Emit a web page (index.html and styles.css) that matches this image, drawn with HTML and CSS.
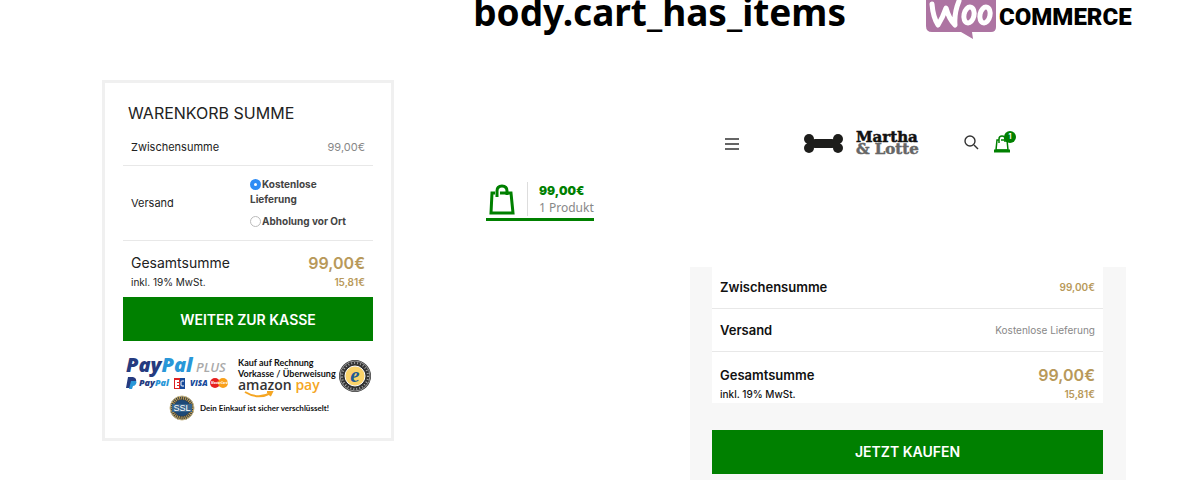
FILE: index.html
```html
<!DOCTYPE html>
<html lang="de">
<head>
  <meta charset="UTF-8">
  <meta name="viewport" content="width=device-width, initial-scale=1">
  <title>body.cart_has_items</title>
  <link rel="stylesheet" href="styles.css">
</head>
<body>

<header class="page-header">
  <h1>body.cart_has_items</h1>
  <!-- WooCommerce logo -->
  <svg class="woo-logo" width="206" height="40" viewBox="0 0 206 40" role="img" aria-label="WooCommerce">
    <path fill="#ad74a2" d="M0-4h70v31q0 5-5 5H50l-4 0 1 7-12-7H6q-6 0-6-6z"/>
    <g fill="none" stroke="#fff" stroke-width="5" stroke-linecap="round" stroke-linejoin="round">
      <path d="M6 4q1 13 6 21q5-8 8-17q3 11 9 17q-1-12 4-24"/>
      <ellipse cx="43" cy="15" rx="5" ry="8" transform="rotate(12 43 15)"/>
      <ellipse cx="59" cy="15" rx="5" ry="8" transform="rotate(12 59 15)"/>
    </g>
    <text class="woo-text" x="73" y="25">COMMERCE</text>
  </svg>
</header>

<main class="board">

  <!-- Warenkorb -->
  <section class="cart-totals">
    <h2>Warenkorb Summe</h2>
    <table class="totals">
      <tr>
        <th>Zwischensumme</th>
        <td class="amount">99,00€</td>
      </tr>
      <tr class="shipping">
        <th>Versand</th>
        <td>
          <div class="method"><input type="radio" name="shipping" id="ship-free" checked><label for="ship-free">Kostenlose Lieferung</label></div>
          <div class="method"><input type="radio" name="shipping" id="ship-local"><label for="ship-local">Abholung vor Ort</label></div>
        </td>
      </tr>
      <tr class="total">
        <th>Gesamtsumme <small>inkl. 19% MwSt.</small></th>
        <td class="amount">99,00€ <small>15,81€</small></td>
      </tr>
    </table>
    <button type="button" class="btn">Weiter zur Kasse</button>

    <!-- Zahlungsarten -->
    <svg class="payments" viewBox="0 0 250 72" role="img" aria-label="Zahlungsarten">
      <text class="paypal big" x="3" y="20" fill="#253b80">Pay<tspan fill="#2997d8">Pal</tspan></text>
      <text class="plus" x="73" y="20">PLUS</text>

      <path fill="#253b80" d="M5 25h5q4 1 3 5q-1 3-5 3l-1 3H3z"/>
      <path fill="#2997d8" d="M8 29h5q1 1 0 3q-1 2-3 2l-1 3H6z"/>
      <text class="paypal small" x="16" y="34" fill="#253b80">Pay<tspan fill="#2997d8">Pal</tspan></text>
      <rect x="51" y="26" width="11" height="11" fill="#d22"/>
      <path fill="#fff" d="M52 28h4v2h-2v1h2v2h-2v1h2v2h-4z"/>
      <path fill="#16499a" d="M57 26h5v11h-5z"/>
      <path fill="none" stroke="#fff" d="M61 29h-2q-1 0-1 1v3q0 1 1 1h2"/>
      <text class="visa" x="67" y="34">VISA</text>
      <circle cx="92" cy="31" r="5" fill="#e62020"/>
      <circle cx="100" cy="31" r="5" fill="#f9a01b"/>
      <text class="mastercard" x="88" y="32">MasterCard</text>

      <text class="label" x="115" y="14">Kauf auf Rechnung</text>
      <text class="label" x="115" y="25">Vorkasse / Überweisung</text>
      <text class="amazon" x="115" y="38">amazon <tspan fill="#f5a623">pay</tspan></text>
      <path fill="none" stroke="#f5a623" stroke-width="2" d="M122 40q13 8 26 1m-4-1l5 0-2 4"/>

      <circle cx="232" cy="24" r="16" fill="#333"/>
      <circle cx="232" cy="24" r="15" fill="none" stroke="#999"/>
      <circle cx="232" cy="24" r="13" fill="none" stroke="#aaa" stroke-width="2" stroke-dasharray="1 2"/>
      <circle cx="232" cy="24" r="10" fill="#fbd36a" stroke="#fff"/>
      <text class="trusted" x="232" y="30">e</text>

      <circle cx="59" cy="56" r="12" fill="#333c45"/>
      <circle cx="59" cy="56" r="10" fill="none" stroke="#c9a655" stroke-width="3" stroke-dasharray="1 1"/>
      <circle cx="59" cy="56" r="12" fill="none" stroke="#c9b98a"/>
      <circle cx="59" cy="56" r="8" fill="#1e4a78"/>
      <path fill="#38658d" d="M49 52h20v8H49z"/>
      <text class="ssl" x="59" y="59">SSL</text>
      <text class="label secure" x="77" y="59">Dein Einkauf ist sicher verschlüsselt!</text>
    </svg>
  </section>

  <!-- Mini cart -->
  <div class="mini-cart-wrap">
    <a href="#" class="mini-cart">
      <svg width="28" height="32" viewBox="0 0 28 32" fill="none" stroke="#008000" stroke-width="3" aria-hidden="true">
        <path d="M7 10H4L3 30h22L23 10H12"/>
        <path d="M9 14V8q0-5 5-5q5 0 5 5v4"/>
      </svg>
      <span class="mini-cart-info">
        <strong>99,00€</strong>
        <span>1 Produkt</span>
      </span>
    </a>
  </div>

  <!-- Mobile -->
  <div class="mobile">
    <nav class="mobile-nav">
      <button type="button" class="icon-btn" aria-label="Menü">
        <svg width="14" height="12" viewBox="0 0 14 12" stroke="#333" stroke-width="1.5"><path d="M0 1h14M0 6h14M0 11h14"/></svg>
      </button>
      <a href="#" class="brand" aria-label="Martha &amp; Lotte">
        <svg width="134" height="24" viewBox="0 0 134 24">
          <g fill="#1d1d1b">
            <circle cx="7" cy="7" r="5"/><circle cx="7" cy="16" r="5"/>
            <circle cx="36" cy="7" r="5"/><circle cx="36" cy="16" r="5"/>
            <path d="M5 6q5 2 8 1h17q4 1 8-1v11q-4-2-8-1H13q-3-1-8 1z"/>
          </g>
          <text class="brand-text" x="54" y="10">Martha</text>
          <text class="brand-text grey" x="54" y="22">&amp; Lotte</text>
        </svg>
      </a>
      <div class="nav-icons">
        <button type="button" class="icon-btn" aria-label="Suche">
          <svg width="15" height="15" viewBox="0 0 15 15" fill="none" stroke="#333" stroke-width="1.4"><circle cx="6" cy="6" r="5"/><path d="M10 10l4 4"/></svg>
        </button>
        <a href="#" class="cart-icon" aria-label="Warenkorb">
          <svg width="16" height="18" viewBox="0 0 16 18" fill="none" stroke="#008000" stroke-width="1.5"><path d="M5 5H3L2 15h12L13 5H7M5 8V4q0-3 3-3t3 3v3"/><path stroke-width="3" d="M0 16h16"/></svg>
          <span class="count">1</span>
        </a>
      </div>
    </nav>

    <section class="checkout">
      <table class="totals order">
        <tr>
          <th>Zwischensumme</th>
          <td class="amount gold">99,00€</td>
        </tr>
        <tr>
          <th>Versand</th>
          <td class="amount">Kostenlose Lieferung</td>
        </tr>
        <tr class="total">
          <th>Gesamtsumme <small>inkl. 19% MwSt.</small></th>
          <td class="amount">99,00€ <small>15,81€</small></td>
        </tr>
      </table>
      <button type="button" class="btn">Jetzt kaufen</button>
    </section>
  </div>

</main>

</body>
</html>
```
FILE: styles.css
```css
* {
  box-sizing: border-box;
}

body {
  margin: 0;
  background: #fff;
  color: #222;
  font-family: Inter, "Open Sans", sans-serif;
  font-size: 11px;
  overflow: hidden;
}

.page-header {
  display: flex;
  justify-content: flex-end;
  gap: 80px;
  height: 80px;
  padding-right: 68px;
}

h1 {
  margin: 0;
  color: #000;
  font-family: "Noto Sans", sans-serif;
  font-size: 37px;
  font-weight: 700;
  line-height: 24px;
}

.woo-logo {
  flex: none;
}

.woo-text {
  font: 900 24px Roboto, sans-serif;
  fill: #000;
}

.board {
  display: grid;
  grid-template-columns: 292fr 112fr 436fr;
  column-gap: 92px;
  align-items: start;
  padding: 0 74px 0 102px;
}

/* cart box */
.cart-totals {
  padding: 20px 18px 14px;
  border: 3px solid #f0f0f0;
}

h2 {
  margin: 0 0 6px 5px;
  font-size: 16px;
  font-weight: 400;
  line-height: 20px;
  text-transform: uppercase;
}

.totals {
  width: 100%;
  border-collapse: collapse;
}

.totals th,
.totals td {
  padding: 0 8px;
  text-align: left;
  font-weight: 400;
}

.totals tr {
  height: 36px;
  border-bottom: 1px solid #e8e8e8;
}

.totals .amount {
  color: #888;
  text-align: right;
}

.totals .shipping {
  height: 75px;
}

.totals .shipping td {
  width: 124px;
  padding: 0 24px 0 1px;
}

.method {
  color: #444;
  font-size: 10px;
  font-weight: 700;
  line-height: 15px;
}

.method + .method {
  margin-top: 7px;
  white-space: nowrap;
}

.method input {
  appearance: none;
  width: 11px;
  height: 11px;
  margin: 0 1px 0 0;
  border: 1px solid #bbb;
  border-radius: 50%;
  vertical-align: -2px;
}

.method input:checked {
  border: 4px solid #2d8cf5;
}

.totals .total {
  height: 57px;
  border-bottom: 0;
}

.totals .total th {
  font-size: 14px;
  line-height: 20px;
}

.totals .total .amount {
  color: #b8995a;
  font-size: 16px;
  font-weight: 600;
  line-height: 20px;
}

.totals .total th,
.totals .total .amount {
  padding-top: 6px;
}

.totals small {
  display: block;
  font-size: 10px;
  line-height: 18px;
}

.btn {
  display: block;
  width: 100%;
  height: 44px;
  border: 0;
  background: #008000;
  color: #fff;
  font-family: inherit;
  font-size: 14px;
  font-weight: 600;
  text-transform: uppercase;
  cursor: pointer;
}

.btn:hover {
  background: #006b00;
}

.payments {
  display: block;
  width: 100%;
  margin-top: 11px;
}

.paypal {
  font-family: "Open Sans", sans-serif;
  font-style: italic;
  font-weight: 800;
}

.paypal.big {
  font-size: 20px;
}

.paypal.small {
  font-size: 9px;
}

.plus {
  font: italic 600 13px "Open Sans", sans-serif;
  fill: #aaa;
}

.visa {
  font: italic 800 8px "Open Sans", sans-serif;
  fill: #16499a;
}

.mastercard {
  font: italic 700 3px "Open Sans", sans-serif;
  fill: #fff;
}

.label {
  font: 700 9px Lato, sans-serif;
  fill: #111;
}

.label.secure {
  font-size: 8px;
}

.amazon {
  font: 600 14px "Open Sans", sans-serif;
  fill: #333;
}

.trusted {
  font: italic 700 21px "Liberation Serif", serif;
  fill: #1e5a94;
  text-anchor: middle;
}

.ssl {
  font: 400 9px "Liberation Sans", sans-serif;
  fill: #fff;
  text-anchor: middle;
}

/* mini cart */
.mini-cart-wrap {
  padding-top: 102px;
}

.mini-cart {
  display: inline-flex;
  align-items: center;
  padding: 0 0 2px 2px;
  border-bottom: 3px solid #008000;
  color: #888;
  text-decoration: none;
  white-space: nowrap;
}

.mini-cart-info {
  display: flex;
  flex-direction: column;
  margin-left: 11px;
  padding-left: 11px;
  border-left: 1px solid #ddd;
  font-family: "Noto Sans", sans-serif;
  font-size: 12px;
  line-height: 17px;
}

.mini-cart strong {
  color: #008000;
  font-family: Inter, sans-serif;
  font-weight: 900;
}

/* mobile */
.mobile-nav {
  display: flex;
  align-items: center;
  justify-content: space-between;
  height: 24px;
  margin: 52px 108px 111px 35px;
}

.icon-btn {
  display: flex;
  padding: 0;
  border: 0;
  background: none;
  cursor: pointer;
}

.brand {
  display: flex;
  margin-left: 34px;
}

.brand svg {
  overflow: visible;
}

.brand-text {
  font: 700 15px "DejaVu Serif", serif;
  fill: #111;
  stroke: #111;
  stroke-width: 0.5;
}

.brand-text.grey {
  fill: #666;
  stroke: #666;
}

.nav-icons {
  display: flex;
  gap: 15px;
}

.cart-icon {
  position: relative;
  display: flex;
  margin-right: 8px;
}

.count {
  position: absolute;
  top: -4px;
  right: -6px;
  width: 12px;
  height: 12px;
  border-radius: 50%;
  background: #008000;
  color: #fff;
  font-size: 7px;
  font-weight: 700;
  line-height: 12px;
  text-align: center;
}

.checkout {
  padding: 0 23px 24px 22px;
  background: #f7f7f7;
}

.order {
  margin-bottom: 27px;
  background: #fff;
}

.order tr {
  height: 41px;
}

.order tr + tr {
  height: 43px;
}

.order th {
  color: #111;
  font-size: 13px;
  font-weight: 600;
}

.order .amount {
  font-size: 10px;
}

.order .gold {
  color: #b8995a;
  font-weight: 600;
}

.totals.order .total {
  height: 51px;
}

.totals.order .total th {
  padding-top: 13px;
  font-size: 13px;
}

.totals.order .total .amount {
  padding-top: 13px;
}

.order th small {
  font-weight: 500;
}
```
